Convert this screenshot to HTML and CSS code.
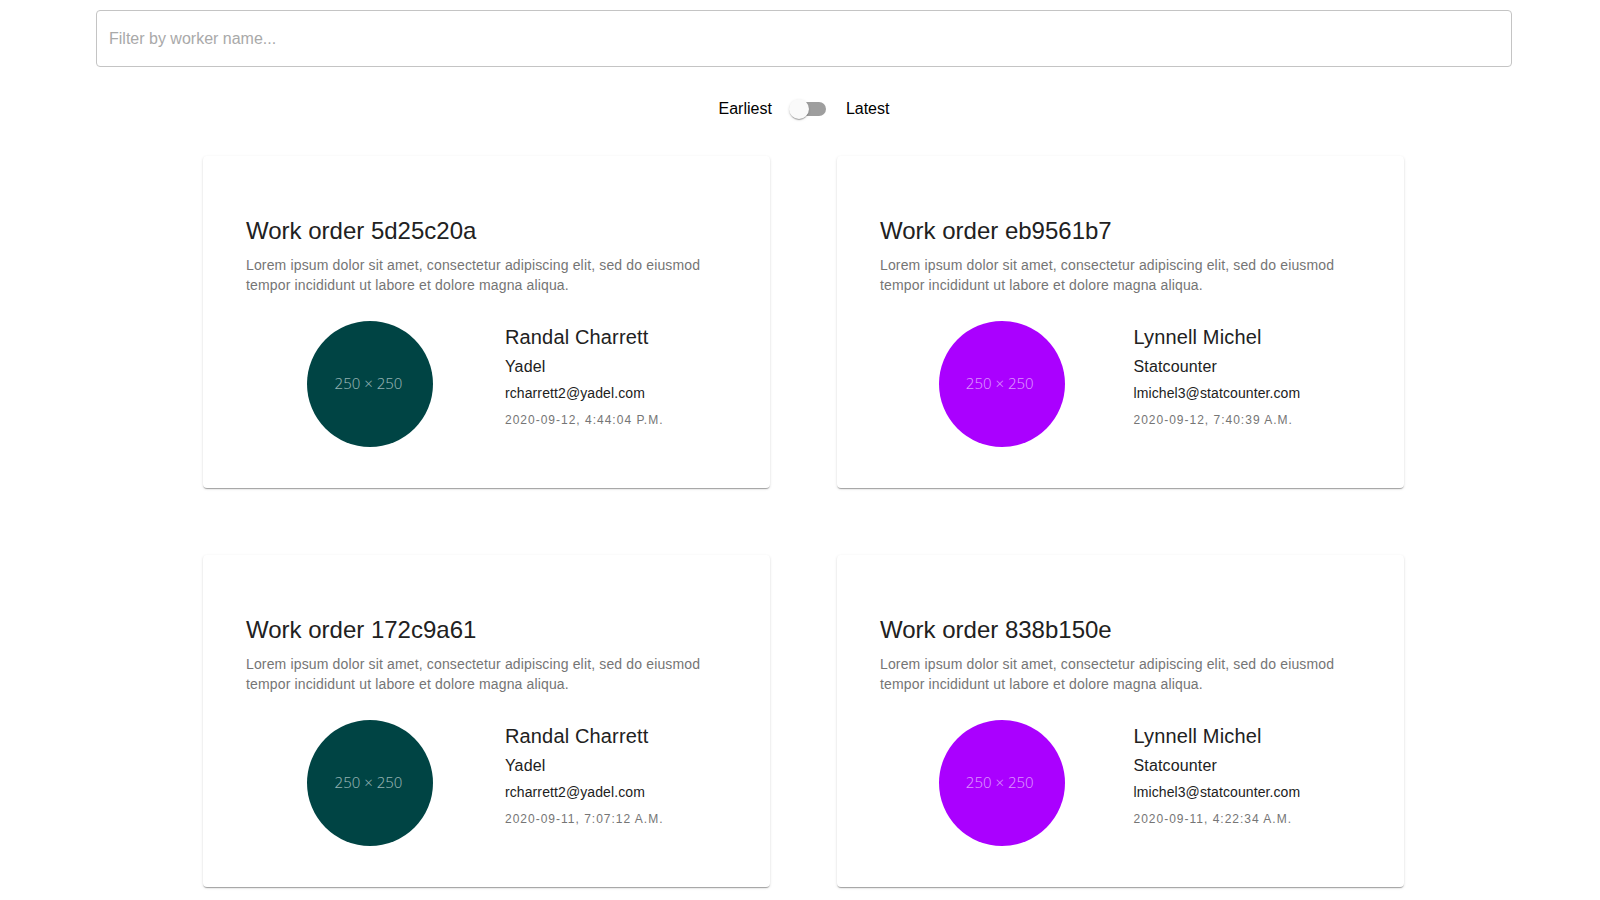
FILE: index.html
```html
<!DOCTYPE html>
<html lang="en">
<head>
<meta charset="utf-8">
<meta name="viewport" content="width=device-width, initial-scale=1">
<title>Work orders</title>
<link rel="stylesheet" href="styles.css">
</head>
<body>
<main class="page">
  <input class="filter" type="text" placeholder="Filter by worker name..." aria-label="Filter by worker name">
  <div class="sort">
    <label for="sort-order">Earliest</label>
    <input class="switch" id="sort-order" type="checkbox" role="switch">
    <label for="sort-order">Latest</label>
  </div>
  <section class="orders">
    <article class="card">
      <h2 class="card-title">Work order 5d25c20a</h2>
      <p class="card-text">Lorem ipsum dolor sit amet, consectetur adipiscing elit, sed do eiusmod tempor incididunt ut labore et dolore magna aliqua.</p>
      <div class="worker">
        <div class="avatar avatar-teal">250 × 250</div>
        <div class="details">
          <h3 class="name">Randal Charrett</h3>
          <p class="company">Yadel</p>
          <p class="email">rcharrett2@yadel.com</p>
          <p class="deadline">2020-09-12, 4:44:04 p.m.</p>
        </div>
      </div>
    </article>
    <article class="card">
      <h2 class="card-title">Work order eb9561b7</h2>
      <p class="card-text">Lorem ipsum dolor sit amet, consectetur adipiscing elit, sed do eiusmod tempor incididunt ut labore et dolore magna aliqua.</p>
      <div class="worker">
        <div class="avatar avatar-purple">250 × 250</div>
        <div class="details">
          <h3 class="name">Lynnell Michel</h3>
          <p class="company">Statcounter</p>
          <p class="email">lmichel3@statcounter.com</p>
          <p class="deadline">2020-09-12, 7:40:39 a.m.</p>
        </div>
      </div>
    </article>
    <article class="card">
      <h2 class="card-title">Work order 172c9a61</h2>
      <p class="card-text">Lorem ipsum dolor sit amet, consectetur adipiscing elit, sed do eiusmod tempor incididunt ut labore et dolore magna aliqua.</p>
      <div class="worker">
        <div class="avatar avatar-teal">250 × 250</div>
        <div class="details">
          <h3 class="name">Randal Charrett</h3>
          <p class="company">Yadel</p>
          <p class="email">rcharrett2@yadel.com</p>
          <p class="deadline">2020-09-11, 7:07:12 a.m.</p>
        </div>
      </div>
    </article>
    <article class="card">
      <h2 class="card-title">Work order 838b150e</h2>
      <p class="card-text">Lorem ipsum dolor sit amet, consectetur adipiscing elit, sed do eiusmod tempor incididunt ut labore et dolore magna aliqua.</p>
      <div class="worker">
        <div class="avatar avatar-purple">250 × 250</div>
        <div class="details">
          <h3 class="name">Lynnell Michel</h3>
          <p class="company">Statcounter</p>
          <p class="email">lmichel3@statcounter.com</p>
          <p class="deadline">2020-09-11, 4:22:34 a.m.</p>
        </div>
      </div>
    </article>
  </section>
</main>
</body>
</html>
```

FILE: styles.css
```css
* {
  box-sizing: border-box;
}

body {
  margin: 0 0 0 8px;
  background: #fff;
  color: #000;
  font-family: "Liberation Sans", Arial, sans-serif;
  font-size: 16px;
}

h2, h3, p {
  margin: 0;
  font-weight: 400;
}

.page {
  display: flex;
  flex-direction: column;
  padding: 10px 88px 0;
}

.filter {
  width: 100%;
  padding: 18px 12px;
  border: 1px solid #c4c4c4;
  border-radius: 4px;
  background: transparent;
  color: #212121;
  font: inherit;
  line-height: 19px;
}

.filter::placeholder {
  color: #a9a9a9;
  opacity: 1;
}

.sort {
  display: flex;
  align-items: center;
  justify-content: center;
  gap: 8px;
  margin: 23px 0 28px;
  line-height: 20px;
}

.switch {
  appearance: none;
  display: grid;
  align-items: center;
  width: 58px;
  height: 38px;
  margin: 0;
  padding: 0 9px;
  cursor: pointer;
}

.switch::before,
.switch::after {
  content: "";
  grid-area: 1 / 1;
}

.switch::before {
  justify-self: center;
  width: 34px;
  height: 14px;
  border-radius: 7px;
  background: #9e9e9e;
}

.switch::after {
  width: 20px;
  height: 20px;
  border-radius: 50%;
  background: #fafafa;
  box-shadow: 0 2px 1px -1px rgba(0, 0, 0, .2), 0 1px 1px rgba(0, 0, 0, .14), 0 1px 3px rgba(0, 0, 0, .12);
}

.switch:checked::after {
  justify-self: end;
}

.orders {
  display: grid;
  grid-template-columns: 1fr 1fr;
  gap: 67px;
  padding: 0 108px 12px 107px;
}

.card {
  padding: 59px 43px 41px;
  border-radius: 4px;
  background: #fff;
  color: #212121;
  box-shadow: 0 2px 1px -1px rgba(0, 0, 0, .2), 0 1px 1px rgba(0, 0, 0, .14), 0 1px 3px rgba(0, 0, 0, .12);
}

.card-title {
  margin-bottom: 8px;
  font-size: 24px;
  line-height: 32px;
}

.card-text {
  color: #757575;
  font-size: 14px;
  line-height: 20px;
  letter-spacing: 0.01071em;
}

.worker {
  display: flex;
  justify-content: space-evenly;
  margin-top: 26px;
}

.avatar {
  display: flex;
  align-items: center;
  justify-content: center;
  width: 126px;
  height: 126px;
  margin-right: 10px;
  padding: 0 4px 2px 0;
  border-radius: 50%;
  font-family: "Noto Sans", "Open Sans", sans-serif;
  font-size: 15px;
  font-weight: 300;
}

.avatar-teal {
  background: #004444;
  color: #91b0b0;
}

.avatar-purple {
  background: #aa00ff;
  color: #dc91ff;
}

.details {
  margin-right: 2px;
}

.name {
  font-size: 20px;
  line-height: 32px;
  letter-spacing: 0.0075em;
}

.company {
  font-size: 16px;
  line-height: 28px;
  letter-spacing: 0.00938em;
}

.email {
  font-size: 14px;
  line-height: 24px;
  letter-spacing: 0.00714em;
}

.deadline {
  color: #757575;
  font-size: 12px;
  line-height: 30px;
  letter-spacing: 0.08333em;
  text-transform: uppercase;
}

@media (max-width: 1200px) {
  .page {
    padding: 10px 16px 0 8px;
  }

  .orders {
    grid-template-columns: 1fr;
    gap: 32px;
    padding: 0 0 12px;
  }
}
```
